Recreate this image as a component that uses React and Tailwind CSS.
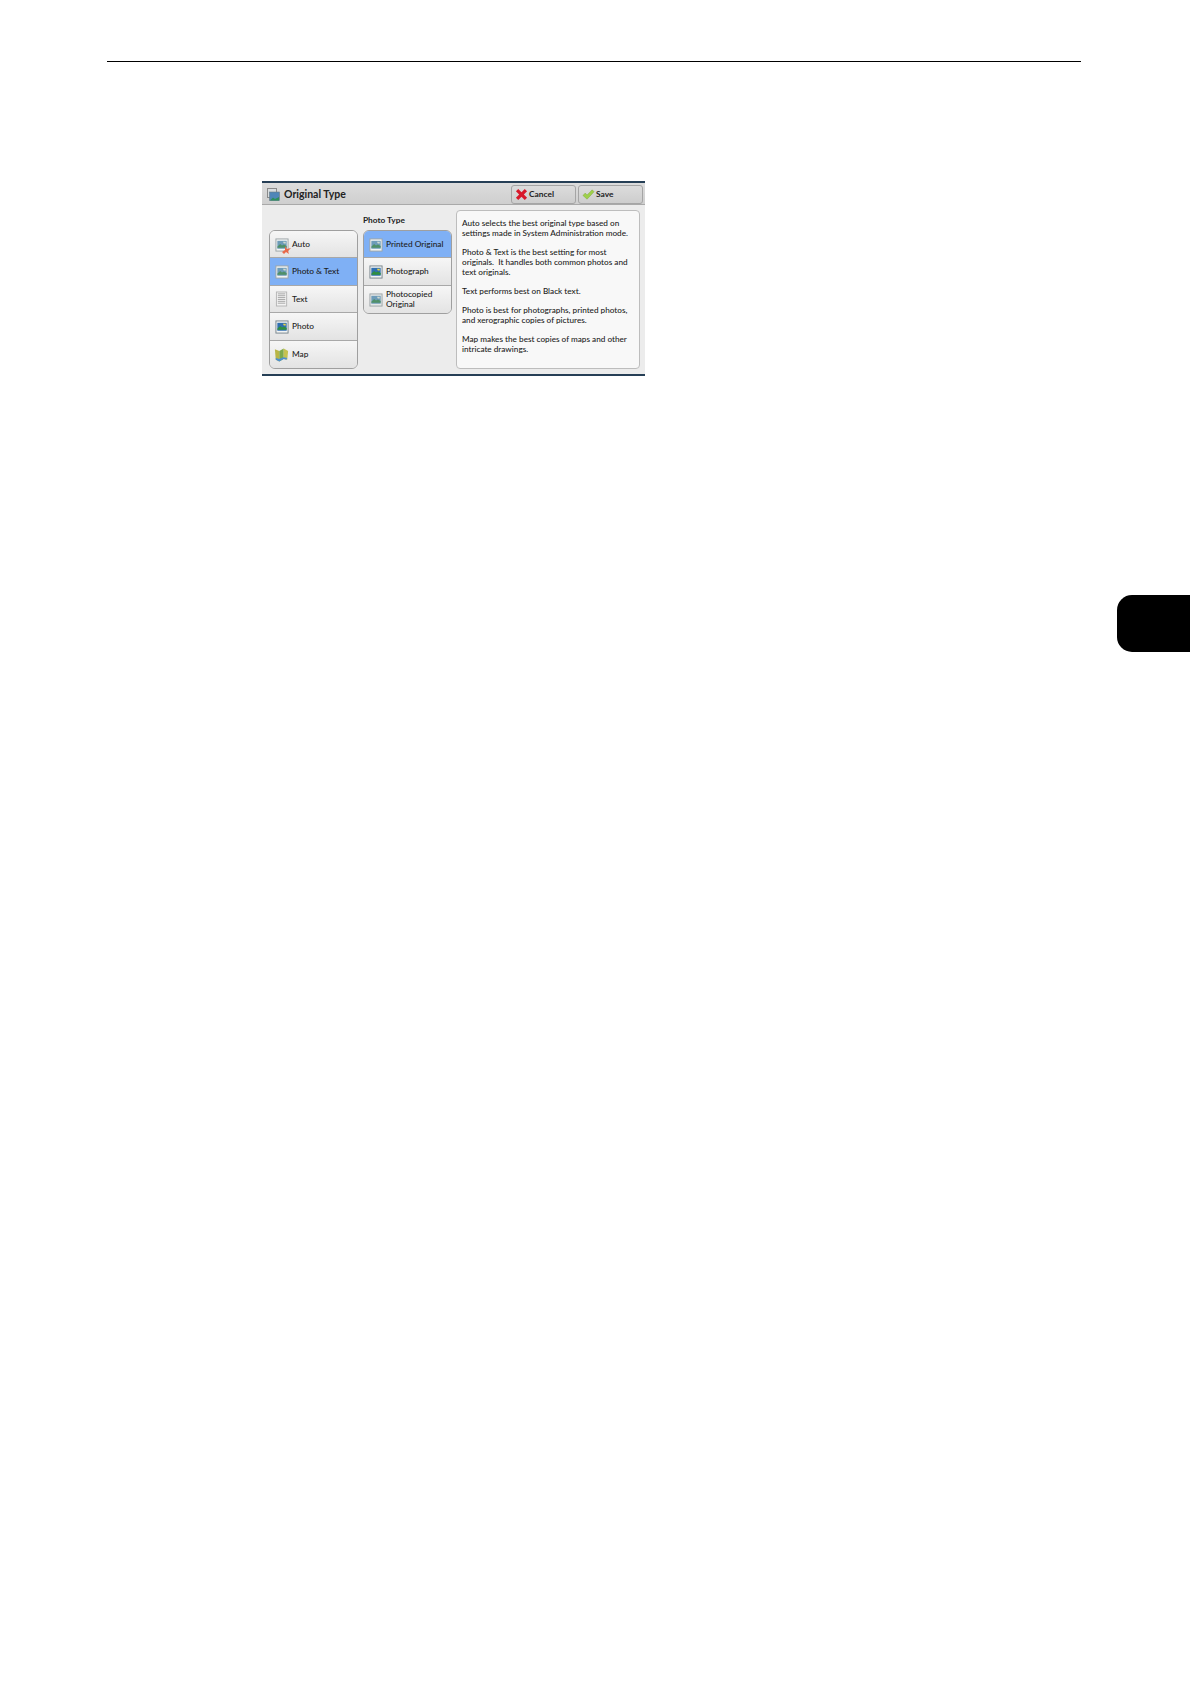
const Pic = ({ washed, framed }) => (
  <svg width="14" height="14" viewBox="0 0 15 15" className="shrink-0">
    <rect x="1" y="1" width="13" height="13" fill={washed ? "#e4e7e6" : "#f2f4f4"} stroke={framed ? "#75828a" : "#9aa3a6"} />
    <rect x="2.5" y="3" width="10" height="8.5" fill={framed ? "#2f6fb0" : "#6d9bb8"} />
    <path d="M2.5 9.5l3-3 2 1.5 2-1 3 1.5v2h-10z" fill={framed ? "#2f8f3f" : "#4f9068"} />
    <path d="M8.5 4h3v2h-2z" fill={framed ? "#e8d24a" : "#cfd9d0"} />
  </svg>
);
const Icon = ({ kind }) => {
  if (kind === "text")
    return (
      <svg width="14" height="16" viewBox="0 0 15 16" className="shrink-0">
        <rect x="1.5" y="0.5" width="11" height="15" fill="#f3f3f3" stroke="#b3b3b3" />
        <path d="M3 2.5h8M3 4.5h8M3 6.5h8M3 8.5h8M3 10.5h8M3 12.5h8" stroke="#a2a2a2" strokeWidth="1" />
      </svg>
    );
  if (kind === "map")
    return (
      <svg width="15" height="16" viewBox="0 0 17 17" className="shrink-0 -ml-[1px]">
        <path d="M1 2l5 2v12l-4-2z" fill="#b9b648" />
        <path d="M6 4l5-3v12l-5 3z" fill="#7da94a" />
        <path d="M11 1l5 3-1 10-4-1z" fill="#c5c24f" />
        <path d="M2 12l4 1 5-2 4 1-1 2-3-1-5 3-4-2z" fill="#4d8fd0" />
      </svg>
    );
  if (kind === "auto")
    return (
      <span className="relative shrink-0 w-[14px] h-[14px] block">
        <Pic />
        <svg width="9" height="9" viewBox="0 0 9 9" className="absolute -right-0.5 -bottom-0.5">
          <path d="M0 7l3-2 0-4 2 3 4-1-3 3 1 3-3-2-2 2z" fill="#e8694a" />
        </svg>
      </span>
    );
  if (kind === "photo") return <Pic framed />;
  if (kind === "washed") return <Pic washed />;
  return <Pic />;
};
const Row = ({ label, kind, active, last, first }) => (
  <div
    className={`flex items-center gap-[3px] pl-[5px] pt-[1px] h-[27.4px] text-[8.3px] font-medium leading-[9.7px] text-[#1c1c1c] ${
      active ? "bg-[#7fb0f5]" : "bg-gradient-to-b from-[#f6f6f6] to-[#e3e3e3]"
    } ${last ? "" : "border-b border-[#a8a8a8]"} ${first ? "rounded-t-[5px]" : ""} ${last ? "rounded-b-[5px]" : ""}`}
  >
    <Icon kind={kind} />
    <span>{label}</span>
  </div>
);
const Action = ({ children }) => (
  <div className="flex items-center gap-[1px] h-[19px] w-[65px] pl-[3px] rounded-[3px] border border-[#a5a5a5] bg-gradient-to-b from-[#dcdcdc] to-[#cdcdcd] text-[8.4px] font-bold text-[#1c1c1c]">
    {children}
  </div>
);
export default function App() {
  return (
    <div className="relative w-[1190px] h-[1684px] bg-white overflow-hidden font-['Lato','Liberation_Sans',sans-serif]">
      <div className="ml-[107px] mr-[109px] pt-[61px]">
        <div className="h-px bg-black" />
      </div>
      <div className="ml-[262px] mt-[119px] w-[383px] h-[195px] flex flex-col bg-[#ececec] border-y-2 border-[#263f56]">
        <div className="h-[23px] flex items-center pt-[2px] pl-[5px] pr-[2px] gap-[4px] bg-gradient-to-b from-[#dcdcdc] to-[#cfcfcf] border-b border-[#a9a9a9]">
          <svg width="13" height="13" viewBox="0 0 13 13" className="shrink-0">
            <rect x="0.5" y="0.5" width="9" height="9" fill="#d8dde0" stroke="#8a8a8a" />
            <rect x="2.5" y="4" width="10" height="8.5" fill="#4f86b8" stroke="#6a7a82" strokeWidth="0.6" />
            <path d="M3 12.5l3-3 2 1.5 4-2v3.5z" fill="#2d8f5a" />
          </svg>
          <span className="text-[10.5px] font-bold text-[#222] flex-1 pt-[1px]">Original Type</span>
          <div className="flex gap-[2px]">
            <Action>
              <svg width="13" height="13" viewBox="0 0 14 14">
                <path d="M1 3.5L3.5 1 7 4.5 10.5 1 13 3.5 9.5 7 13 10.5 10.5 13 7 9.5 3.5 13 1 10.5 4.5 7z" fill="#d8182a" />
              </svg>
              <span>Cancel</span>
            </Action>
            <Action>
              <svg width="13" height="13" viewBox="0 0 14 14">
                <path d="M1 8l2.5-2.5L5.5 7.5 11 2l2 2-7.5 8z" fill="#9ed04a" stroke="#7fa83c" strokeWidth="0.5" />
              </svg>
              <span>Save</span>
            </Action>
          </div>
        </div>
        <div className="flex-1 flex pl-[7px] pr-[5px] pt-[5px] pb-[6px]">
          <div className="w-[89px] mt-[20px] flex flex-col rounded-[6px] border border-[#9f9f9f] self-stretch">
            <Row label="Auto" kind="auto" first />
            <Row label="Photo & Text" kind="pic" active />
            <Row label="Text" kind="text" />
            <Row label="Photo" kind="photo" />
            <Row label="Map" kind="map" last />
          </div>
          <div className="w-[89px] ml-[5px] flex flex-col">
            <div className="h-[20px] pt-[5px] text-[8.3px] font-bold leading-[10px] text-[#222]">Photo Type</div>
            <div className="flex flex-col rounded-[6px] border border-[#9f9f9f]">
              <Row label="Printed Original" kind="pic" active first />
              <Row label="Photograph" kind="photo" />
              <Row label={<>Photocopied<br />Original</>} kind="washed" last />
            </div>
          </div>
          <div className="ml-[4px] flex-1 rounded-[4px] border border-[#bdbdbd] bg-[#f8f8f8] px-[5px] pt-[8px] text-[8.2px] font-medium leading-[9.7px] text-[#1c1c1c]">
            <p>Auto selects the best original type based on settings made in System Administration mode.</p>
            <p className="mt-[9.7px]">Photo &amp; Text is the best setting for most originals.&nbsp; It handles both common photos and text originals.</p>
            <p className="mt-[9.7px]">Text performs best on Black text.</p>
            <p className="mt-[9.7px]">Photo is best for photographs, printed photos, and xerographic copies of pictures.</p>
            <p className="mt-[9.7px]">Map makes the best copies of maps and other intricate drawings.</p>
          </div>
        </div>
      </div>
      <div className="absolute left-[1117px] top-[595px] w-[73px] h-[57px] bg-black rounded-l-[15px]" />
    </div>
  );
}
